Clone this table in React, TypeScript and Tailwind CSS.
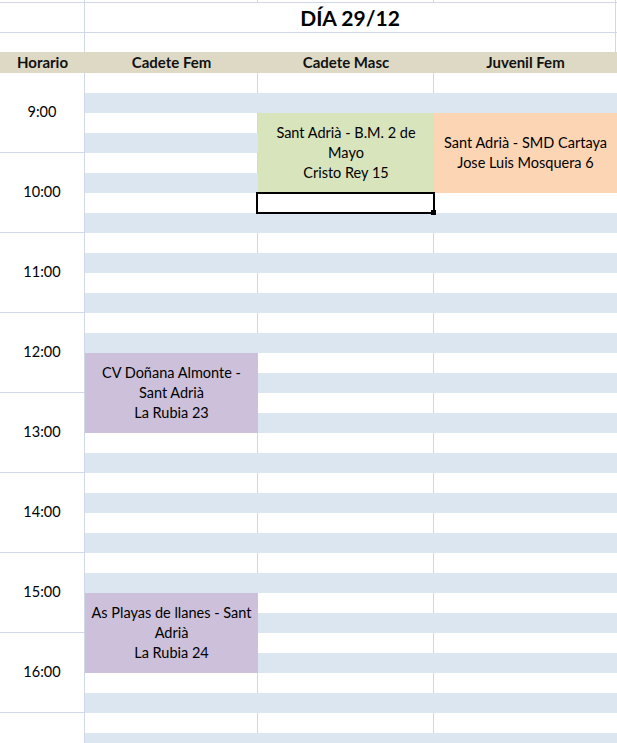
import React from "react";

type Ev = { start: number; bg: string; lines: string[] };

const GRID = "border-[#D0D7E5]";

const col1: Ev[] = [
  { start: 14, bg: "bg-[#CCC0DA]", lines: ["CV Doñana Almonte -", "Sant Adrià", "La Rubia 23"] },
  { start: 26, bg: "bg-[#CCC0DA]", lines: ["As Playas de llanes - Sant", "Adrià", "La Rubia 24"] },
];
const col2: Ev[] = [
  { start: 2, bg: "bg-[#D8E4BC]", lines: ["Sant Adrià - B.M. 2 de", "Mayo", "Cristo Rey 15"] },
];
const col3: Ev[] = [
  { start: 2, bg: "bg-[#FCD5B4]", lines: ["Sant Adrià - SMD Cartaya", "Jose Luis Mosquera 6"] },
];

const ROWS = 34;

function Column({ events, widthClass, selectRow, lastCol }: { events: Ev[]; widthClass: string; selectRow?: number; lastCol?: boolean }) {
  const cells: React.ReactNode[] = [];
  let r = 0;
  while (r < ROWS) {
    const ev = events.find((e) => e.start === r);
    if (ev) {
      cells.push(
        <div key={r} className={`h-20 flex flex-col items-center justify-center text-center leading-5 ${ev.bg}`}>
          {ev.lines.map((l, i) => (
            <div key={i} className="whitespace-nowrap">{l}</div>
          ))}
        </div>
      );
      r += 4;
      continue;
    }
    const blue = r % 2 === 1;
    cells.push(
      <div
        key={r}
        className={
          blue
            ? "h-5 bg-[#DCE6F1]"
            : `h-5 bg-white ${lastCol ? "" : `border-r ${GRID}`} relative`
        }
      >
        {selectRow === r && (
          <div className="absolute left-[-2px] top-[-1px] w-[179px] h-[22px] border-2 border-black z-10">
            <div className="absolute right-[-3px] bottom-[-3px] w-[5px] h-[5px] bg-black" />
          </div>
        )}
      </div>
    );
    r += 1;
  }
  return <div className={`flex flex-col ${widthClass}`}>{cells}</div>;
}

export default function App() {
  const hours = ["9:00", "10:00", "11:00", "12:00", "13:00", "14:00", "15:00", "16:00"];
  return (
    <div
      className="w-[617px] h-[743px] overflow-hidden bg-white text-black text-[14.5px]"
      style={{ fontFamily: "Lato, 'Open Sans', sans-serif" }}
    >
      {/* top partial row */}
      <div className={`flex h-[3px] border-b ${GRID}`}>
        <div className={`w-[85px] border-r ${GRID}`} />
        <div className={`w-[173px] border-r ${GRID}`} />
        <div className={`w-[176px] border-r ${GRID}`} />
        <div className={`w-[182px] border-r ${GRID}`} />
      </div>
      {/* title row */}
      <div className={`flex h-[30px] border-b ${GRID}`}>
        <div className={`w-[85px] border-r ${GRID}`} />
        <div className={`w-[531px] border-r ${GRID} flex items-center justify-center font-bold text-[21px]`}>
          DÍA 29/12
        </div>
      </div>
      {/* spacer row */}
      <div className="flex h-[19px]">
        <div className={`w-[85px] border-r ${GRID}`} />
        <div className={`w-[531px] border-r ${GRID}`} />
      </div>
      {/* header */}
      <div className="flex h-[21px] bg-[#DDD9C4] font-bold items-center text-[15px] text-[#111]">
        <div className="w-[85px] text-center">Horario</div>
        <div className="w-[173px] text-center">Cadete Fem</div>
        <div className="w-[176px] text-center">Cadete Masc</div>
        <div className="flex-1 text-center">Juvenil Fem</div>
      </div>
      {/* body */}
      <div className="flex">
        <div className={`w-[85px] border-r ${GRID} flex flex-col`}>
          {hours.map((h) => (
            <div key={h} className={`h-20 border-b ${GRID} flex items-center justify-center pb-[2px]`}>
              {h}
            </div>
          ))}
          <div className="h-20" />
        </div>
        <Column events={col1} widthClass="w-[173px]" />
        <Column events={col2} widthClass="w-[176px]" selectRow={6} />
        <Column events={col3} widthClass="flex-1" lastCol />
      </div>
    </div>
  );
}
